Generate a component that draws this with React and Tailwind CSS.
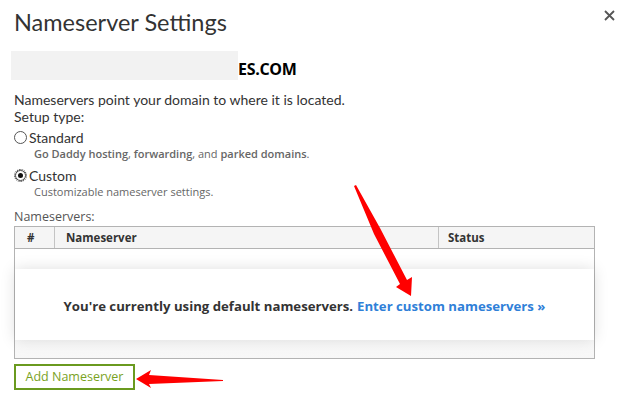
export default function App() {
  return (
    <div className="relative w-[627px] h-[397px] bg-white overflow-hidden text-[#333]" style={{ fontFamily: '"Open Sans", sans-serif' }}>
      {/* header */}
      <div className="flex items-start justify-between pl-[14px] pr-[12px] pt-[6px]">
        <h1 className="text-[23.5px] leading-[32px] text-[#333] font-normal" style={{ fontFamily: 'Lato, sans-serif' }}>
          Nameserver Settings
        </h1>
        <svg className="mt-[4px]" width="11" height="11" viewBox="0 0 11 11">
          <path d="M1 1L10 10M10 1L1 10" stroke="#555" strokeWidth="1.8" />
        </svg>
      </div>

      {/* domain */}
      <div className="mt-[13px] ml-[11px] flex items-center h-[29px]">
        <div className="w-[227px] h-[29px] bg-[#f2f2f2]" />
        <span className="text-[16px] font-bold text-black tracking-[-0.3px] pt-[6px]">ES.COM</span>
      </div>

      <div className="px-[14px] mt-[11px]" style={{ fontFamily: 'Lato, sans-serif' }}>
        <p className="text-[14px] leading-[17px]">Nameservers point your domain to where it is located.</p>
        <p className="text-[14px] leading-[17px]">Setup type:</p>

        <label className="mt-[4px] flex items-center gap-[2px] text-[14px] leading-[17px]">
          <span className="w-[13px] h-[13px] rounded-full border border-[#555] bg-white" />
          <span>Standard</span>
        </label>
        <p className="ml-[20px] text-[11px] leading-[15px] text-[#666]" style={{ fontFamily: '"Open Sans", sans-serif' }}>
          <span className="font-semibold">Go Daddy hosting</span>, <span className="font-semibold">forwarding</span>, and{' '}
          <span className="font-semibold">parked domains</span>.
        </p>

        <label className="mt-[6px] flex items-center gap-[2px] text-[14px] leading-[17px]">
          <span className="w-[13px] h-[13px] rounded-full border border-dotted border-[#222] flex items-center justify-center">
            <span className="w-[11px] h-[11px] rounded-full border border-[#444] flex items-center justify-center">
              <span className="w-[5px] h-[5px] rounded-full bg-[#111]" />
            </span>
          </span>
          <span>Custom</span>
        </label>
        <p className="ml-[20px] text-[11px] leading-[15px] text-[#666]" style={{ fontFamily: '"Open Sans", sans-serif' }}>
          Customizable nameserver settings.
        </p>
      </div>

      {/* nameservers table */}
      <div className="px-[14px] mt-[9px]">
        <p className="text-[12.5px] leading-[18px] text-[#555]">Nameservers:</p>
        <div className="w-[581px] border border-[#b3b3b3]">
          <div className="flex h-[22px] bg-[#f5f5f5] border-b border-[#b3b3b3] text-[11.5px] font-bold text-[#333] items-stretch">
            <div className="w-[40px] border-r border-[#c4c4c4] flex items-center pl-[12px]">#</div>
            <div className="w-[384px] border-r border-[#c4c4c4] flex items-center pl-[11px]">Nameserver</div>
            <div className="flex-1 flex items-center pl-[9px]">Status</div>
          </div>
          <div className="pt-[20px] pb-[18px] bg-gradient-to-b from-white via-white to-[#f7f7f7]">
            <div className="h-[71px] pt-[4px] bg-white shadow-[0_0_14px_rgba(0,0,0,0.13)] flex items-center justify-center text-[13.2px] font-bold">
              <span className="text-[#333]">You're currently using default nameservers.</span>
              <span className="ml-[4px] text-[#2f80d8]">Enter custom nameservers »</span>
            </div>
          </div>
        </div>

        <button className="mt-[5px] w-[121px] h-[26px] border-2 border-[#6a9a1f] text-[12.5px] text-[#7aa21e] flex items-center justify-center">
          Add Nameserver
        </button>
      </div>

      {/* annotation arrows */}
      <svg className="absolute inset-0 pointer-events-none" width="627" height="397">
        <polygon points="354,186 356,185 380,228 407,280 412,277 411,296 396,287 400,284 374,234" fill="#ff0000" />
        <polygon points="136,379 151,370 149,375 223,380 223,381 149,384 151,388" fill="#ff0000" />
      </svg>
    </div>
  );
}
